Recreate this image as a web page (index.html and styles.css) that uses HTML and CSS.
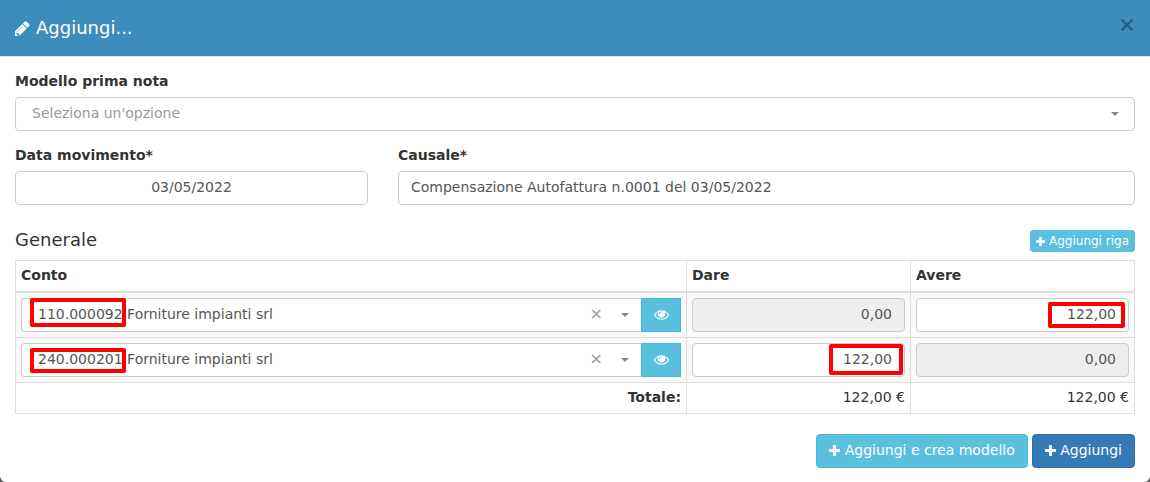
FILE: index.html
```html
<!DOCTYPE html>
<html lang="it">
<head>
<meta charset="utf-8">
<title>Aggiungi</title>
<link rel="stylesheet" href="styles.css">
</head>
<body>
<div class="modal">
  <header class="modal-header">
    <h4 class="modal-title">
      <svg class="icon-pencil" viewBox="128 128 1408 1408" aria-hidden="true"><path fill="currentColor" d="M491 1536l91-91-235-235-91 91v107h128v128h107zm372-928q0-22-22-22-10 0-17 7l-542 542q-7 7-7 17 0 22 22 22 10 0 17-7l542-542q7-7 7-17zm-54-192l416 416-832 832h-416v-416zm683 96q0 53-37 90l-166 166-416-416 166-165q36-38 90-38 53 0 91 38l235 234q37 39 37 91z"/></svg>
      Aggiungi...
    </h4>
    <svg class="close" viewBox="0 0 14 14" aria-hidden="true"><path d="M1.500 1.500l11 11M12.500 1.500l-11 11" stroke="currentColor" stroke-width="2.200" fill="none"/></svg>
  </header>
  <div class="modal-body">
    <div class="field">
      <label class="label">Modello prima nota</label>
      <div class="select">
        <span class="placeholder">Seleziona un'opzione</span>
        <span class="caret"></span>
      </div>
    </div>
    <div class="row">
      <div class="field col-date">
        <label class="label">Data movimento*</label>
        <div class="input center">03/05/2022</div>
      </div>
      <div class="field col-cause">
        <label class="label">Causale*</label>
        <div class="input">Compensazione Autofattura n.0001 del 03/05/2022</div>
      </div>
    </div>
    <div class="section-head">
      <h4 class="section-title">Generale</h4>
      <button class="btn btn-xs btn-info" type="button"><svg class="icon-plus" viewBox="0 128 1408 1408" aria-hidden="true"><path fill="currentColor" d="M1408 736v192q0 40-28 68t-68 28h-416v416q0 40-28 68t-68 28h-192q-40 0-68-28t-28-68v-416h-416q-40 0-68-28t-28-68v-192q0-40 28-68t68-28h416v-416q0-40 28-68t68-28h192q40 0 68 28t28 68v416h416q40 0 68 28t28 68z"/></svg> Aggiungi riga</button>
    </div>
    <table class="table">
      <colgroup><col class="c-conto"><col class="c-amt"><col class="c-amt"></colgroup>
      <thead>
        <tr><th>Conto</th><th>Dare</th><th>Avere</th></tr>
      </thead>
      <tbody>
        <tr class="line">
          <td>
            <div class="account">
              <div class="account-select">
                <span class="code">110.000092</span> <span>Forniture impianti srl</span>
                <span class="mark mark-code-a"></span>
                <span class="clear">×</span>
                <span class="caret"></span>
              </div>
              <span class="eye-btn"><svg class="icon-eye" viewBox="0 256 1792 1280" aria-hidden="true"><path fill="currentColor" d="M1664 960q-152-236-381-353 61 104 61 225 0 185-131.500 316.500t-316.500 131.500-316.500-131.500-131.500-316.500q0-121 61-225-229 117-381 353 133 205 333.500 326.500t434.500 121.500 434.500-121.500 333.500-326.500zm-720-384q0-20-14-34t-34-14q-125 0-214.500 89.500t-89.500 214.500q0 20 14 34t34 14 34-14 14-34q0-86 61-147t147-61q20 0 34-14t14-34zm848 384q0 34-20 69-140 230-376.500 368.500t-499.500 138.500-499.500-139-376.500-368q-20-35-20-69t20-69q140-229 376.500-368t499.500-139 499.500 139 376.500 368q20 35 20 69z"/></svg></span>
            </div>
          </td>
          <td><div class="input amount disabled">0,00</div></td>
          <td><div class="input amount">122,00<span class="mark mark-amount-a"></span></div></td>
        </tr>
        <tr class="line">
          <td>
            <div class="account">
              <div class="account-select">
                <span class="code">240.000201</span> <span>Forniture impianti srl</span>
                <span class="mark mark-code-b"></span>
                <span class="clear">×</span>
                <span class="caret"></span>
              </div>
              <span class="eye-btn"><svg class="icon-eye" viewBox="0 256 1792 1280" aria-hidden="true"><path fill="currentColor" d="M1664 960q-152-236-381-353 61 104 61 225 0 185-131.500 316.500t-316.500 131.500-316.500-131.500-131.500-316.500q0-121 61-225-229 117-381 353 133 205 333.500 326.500t434.500 121.500 434.500-121.500 333.500-326.500zm-720-384q0-20-14-34t-34-14q-125 0-214.500 89.500t-89.500 214.500q0 20 14 34t34 14 34-14 14-34q0-86 61-147t147-61q20 0 34-14t14-34zm848 384q0 34-20 69-140 230-376.500 368.500t-499.500 138.500-499.500-139-376.500-368q-20-35-20-69t20-69q140-229 376.500-368t499.500-139 499.500 139 376.500 368q20 35 20 69z"/></svg></span>
            </div>
          </td>
          <td><div class="input amount">122,00<span class="mark mark-amount-b"></span></div></td>
          <td><div class="input amount disabled">0,00</div></td>
        </tr>
        <tr class="total">
          <td class="total-label">Totale:</td>
          <td class="total-value">122,00 €</td>
          <td class="total-value">122,00 €</td>
        </tr>
      </tbody>
    </table>
    <div class="actions">
      <button class="btn btn-info" type="button"><svg class="icon-plus" viewBox="0 128 1408 1408" aria-hidden="true"><path fill="currentColor" d="M1408 736v192q0 40-28 68t-68 28h-416v416q0 40-28 68t-68 28h-192q-40 0-68-28t-28-68v-416h-416q-40 0-68-28t-28-68v-192q0-40 28-68t68-28h416v-416q0-40 28-68t68-28h192q40 0 68 28t28 68v416h416q40 0 68 28t28 68z"/></svg> Aggiungi e crea modello</button>
      <button class="btn btn-primary" type="button"><svg class="icon-plus" viewBox="0 128 1408 1408" aria-hidden="true"><path fill="currentColor" d="M1408 736v192q0 40-28 68t-68 28h-416v416q0 40-28 68t-68 28h-192q-40 0-68-28t-28-68v-416h-416q-40 0-68-28t-28-68v-192q0-40 28-68t68-28h416v-416q0-40 28-68t68-28h192q40 0 68 28t28 68v416h416q40 0 68 28t28 68z"/></svg> Aggiungi</button>
    </div>
  </div>
</div>
</body>
</html>
```
FILE: styles.css
```css
* { box-sizing: border-box; }
html, body { margin: 0; height: 482px; overflow: hidden; }
body {
  background: #555;
  font-family: "DejaVu Sans", sans-serif;
  font-size: 14px;
  line-height: 20px;
  color: #333;
}
.modal { width: 1150px; height: 482px; background: #fff; border-radius: 0 0 6px 6px; overflow: hidden; }
.modal-header {
  height: 57px;
  background: #3c8dbc;
  border-bottom: 1px solid #e5e5e5;
  padding: 0 15px;
  display: flex;
  align-items: center;
  justify-content: space-between;
  color: #fff;
}
.modal-title { margin: 0; font-size: 18px; font-weight: 400; line-height: 20px; display: flex; align-items: center; gap: 6px; }
.icon-pencil { width: 15px; height: 15px; }
.close { width: 14px; height: 14px; color: #2a5d7b; margin-right: 1px; margin-top: -6px; }
.modal-body { padding: 14px 15px 0; }
.label { display: block; font-weight: 700; margin-bottom: 6px; height: 20px; line-height: 20px; }
.field { margin-bottom: 14px; }
.select, .input {
  height: 34px;
  border: 1px solid #ccc;
  border-radius: 4px;
  background: #fff;
  color: #555;
  padding: 5px 12px 7px;
  position: relative;
}
.select { display: flex; align-items: center; justify-content: space-between; padding: 5px 15px 7px 16px; }
.select .caret { margin-top: 2px; }
.placeholder { color: #999; }
.caret { width: 0; height: 0; border-left: 4px solid transparent; border-right: 4px solid transparent; border-top: 4px solid #888; flex: none; }
.row { display: flex; gap: 30px; margin-top: 10px; }
.col-date { width: 353px; flex: none; }
.col-cause { flex: 1; margin-bottom: 0; }
.center { text-align: center; }
.section-head { display: flex; justify-content: space-between; align-items: center; height: 22px; margin: 11px 0 8px; }
.section-title { margin: 0 0 3px; font-size: 18px; font-weight: 400; line-height: 20px; }
.btn {
  font-family: inherit;
  border: 1px solid;
  border-radius: 4px;
  color: #fff;
  font-size: 14px;
  line-height: 20px;
  padding: 5px 12px 7px;
  display: inline-flex;
  align-items: center;
  white-space: pre;
}
.btn-info { background: #5bc0de; border-color: #46b8da; }
.btn-primary { background: #337ab7; border-color: #2e6da4; }
.btn-xs { font-size: 12px; line-height: 18px; padding: 1px 5px; border-color: #5bc0de; height: 22px; border-radius: 3px; }
.icon-plus { width: 11px; height: 11px; flex: none; }
.btn-xs .icon-plus { width: 9px; height: 9px; }
.table { width: 1120px; border-collapse: collapse; table-layout: fixed; }
.c-amt { width: 224px; }
.table th, .table td { border: 1px solid #ddd; padding: 5px; }
.table th { text-align: left; height: 31px; border-bottom-width: 2px; font-weight: 700; padding: 4px 5px 6px; }
.line td { height: 45px; background: #f9f9f9; }
.table .total td { height: 31px; background: #fff; padding: 4px 5px 6px; }
.total-label { text-align: right; font-weight: 700; }
.total-value { text-align: right; }
.account { display: flex; height: 34px; }
.account-select {
  flex: 1;
  position: relative;
  border: 1px solid #ccc;
  border-right: 0;
  border-radius: 4px 0 0 4px;
  background: #fff;
  color: #555;
  padding: 5px 0 7px 16px;
}
.account-select .caret { position: absolute; right: 12px; top: 14px; }
.clear { position: absolute; right: 38px; top: 5px; color: #999; font-size: 16px; }
.eye-btn {
  width: 40px;
  flex: none;
  background: #5bc0de;
  border: 1px solid #46b8da;
  color: #fff;
  display: flex;
  align-items: center;
  justify-content: center;
  padding-bottom: 1px;
}
.icon-eye { width: 15px; height: 11px; }
.amount { text-align: right; }
.disabled { background: #eee; }
.mark { position: absolute; border: 4px solid #f00; border-radius: 2px; pointer-events: none; }
.mark-code-a { left: 8px; top: -1px; width: 96px; height: 29px; }
.mark-code-b { left: 8px; top: 4px; width: 96px; height: 25px; }
.mark-amount-a { right: 3px; top: 3px; width: 77px; height: 26px; }
.mark-amount-b { right: 1px; top: 0; width: 74px; height: 31px; }
.actions { display: flex; justify-content: flex-end; gap: 4px; margin-top: 20px; }
```
